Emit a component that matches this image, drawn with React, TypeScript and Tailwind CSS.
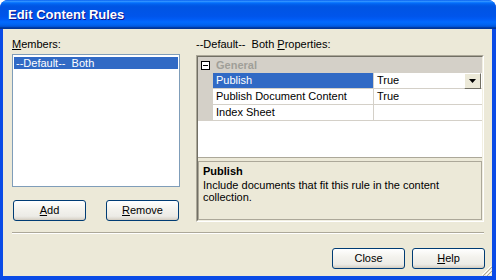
import type { ReactNode } from 'react'

const XpButton = ({ children, className = '' }: { children: ReactNode; className?: string }) => (
  <button
    type="button"
    className={`h-[21px] w-[73px] rounded-[3px] border border-[#003C74] bg-[linear-gradient(to_bottom,#FFFFFF_0%,#F4F3EE_40%,#ECEBE6_80%,#D6D0C5_100%)] text-[11px] leading-[13px] text-black shadow-[inset_0_-1px_0_#D6D0C5] ${className}`}
  >
    {children}
  </button>
)

const PropRow = ({ name, value, selected = false }: { name: string; value?: string; selected?: boolean }) => (
  <div className="flex h-[16px]">
    <div className="w-[15px] bg-[#D4D0C8]" />
    <div
      className={`flex w-[160px] items-center border-b border-[#D4D0C8] pl-[3px] ${
        selected ? 'bg-[#316AC5] text-white' : 'bg-white text-black'
      }`}
    >
      {name}
    </div>
    <div className="w-px bg-[#D4D0C8]" />
    <div className="relative flex flex-1 items-center border-b border-[#D4D0C8] bg-white pl-[3px]">
      {value}
      {selected && (
        <div className="absolute right-[1px] top-0 flex h-[16px] w-[17px] items-center justify-center border border-t-white border-l-white border-r-[#716F64] border-b-[#716F64] bg-[#ECE9D8]">
          <svg width="7" height="4" viewBox="0 0 7 4">
            <path d="M0 0h7L3.5 4z" fill="#000" />
          </svg>
        </div>
      )}
    </div>
  </div>
)

export default function App() {
  return (
    <div className="flex h-[280px] w-[496px] flex-col overflow-hidden rounded-t-[8px] bg-[#0A4BE6] font-['Liberation_Sans',Arial,sans-serif] text-[11px] leading-[13px] text-black">
      {/* Title bar */}
      <div className="flex h-[29px] shrink-0 items-center bg-[linear-gradient(to_bottom,#0058EE_0%,#3593FF_4%,#288EFF_6%,#127DFF_8%,#036FFC_10%,#0262EE_14%,#0057E5_20%,#0054E3_24%,#0055EB_56%,#005BF5_66%,#026AFE_76%,#0062EF_86%,#0052D6_92%,#0040AB_94%,#003092_100%)] pl-[8px]">
        <span className="text-[13px] font-bold leading-[16px] text-white [text-shadow:1px_1px_#0F1089]">
          Edit Content Rules
        </span>
      </div>

      {/* Body */}
      <div className="relative mb-[4px] ml-[3px] mr-[4px] flex flex-1 flex-col bg-[#ECE9D8] pl-[9px] pr-[8px] pt-[9px]">
        <div className="flex gap-[16px]">
          {/* Members */}
          <div className="flex w-[168px] flex-col">
            <div className="h-[13px]">
              <span className="underline">M</span>embers:
            </div>
            <div className="mt-[3px] h-[133px] border border-[#7F9DB9] bg-white px-[1px] pt-[2px]">
              <div className="h-[12px] whitespace-pre bg-[#316AC5] pl-[2px] leading-[12px] text-white">
                --Default--  Both
              </div>
            </div>
            <div className="mt-[13px] flex">
              <XpButton className="ml-[1px]">
                <span className="underline">A</span>dd
              </XpButton>
              <XpButton className="ml-[20px]">
                <span className="underline">R</span>emove
              </XpButton>
            </div>
          </div>

          {/* Properties */}
          <div className="flex w-[288px] flex-col">
            <div className="h-[13px] whitespace-pre">
              --Default--  Both <span className="underline">P</span>roperties:
            </div>
            <div className="mt-[4px] h-[167px] border border-b-white border-l-[#ACA899] border-r-white border-t-[#ACA899]">
              <div className="flex h-full flex-col border border-b-[#F1EFE2] border-l-[#716F64] border-r-[#F1EFE2] border-t-[#716F64] bg-[#ECE9D8]">
                <div className="h-[101px] border-b border-[#ACA899] bg-white">
                  <div className="flex h-[16px] items-center bg-[#D4D0C8]">
                    <div className="ml-[3px] flex h-[9px] w-[9px] items-center justify-center border border-black bg-white">
                      <div className="h-px w-[5px] bg-black" />
                    </div>
                    <span className="ml-[6px] font-bold text-[#A09F98]">General</span>
                  </div>
                  <PropRow name="Publish" value="True" selected />
                  <PropRow name="Publish Document Content" value="True" />
                  <PropRow name="Index Sheet" />
                </div>
                <div className="mt-[3px] flex-1 border border-[#ACA899] px-[4px] pt-[3px]">
                  <div className="font-bold">Publish</div>
                  <div className="mt-[1px] w-[250px] leading-[12px]">
                    Include documents that fit this rule in the content collection.
                  </div>
                </div>
              </div>
            </div>
          </div>
        </div>

        {/* Separator */}
        <div className="mt-[10px] h-[2px] border-b border-t border-b-white border-t-[#ACA899]" />

        <div className="mt-[14px] flex justify-end gap-[7px] pr-[-1px]">
          <XpButton>Close</XpButton>
          <XpButton className="mr-[-1px]">
            <span className="underline">H</span>elp
          </XpButton>
        </div>

        {/* Resize grip */}
        <svg className="absolute bottom-0 right-0" width="12" height="12" viewBox="0 0 12 12">
          <path d="M11 2L2 11M11 6L6 11M11 10L10 11" stroke="#FFFFFF" strokeWidth="1" />
          <path d="M12 3L3 12M12 7L7 12" stroke="#ACA899" strokeWidth="1" />
        </svg>
      </div>
    </div>
  )
}
